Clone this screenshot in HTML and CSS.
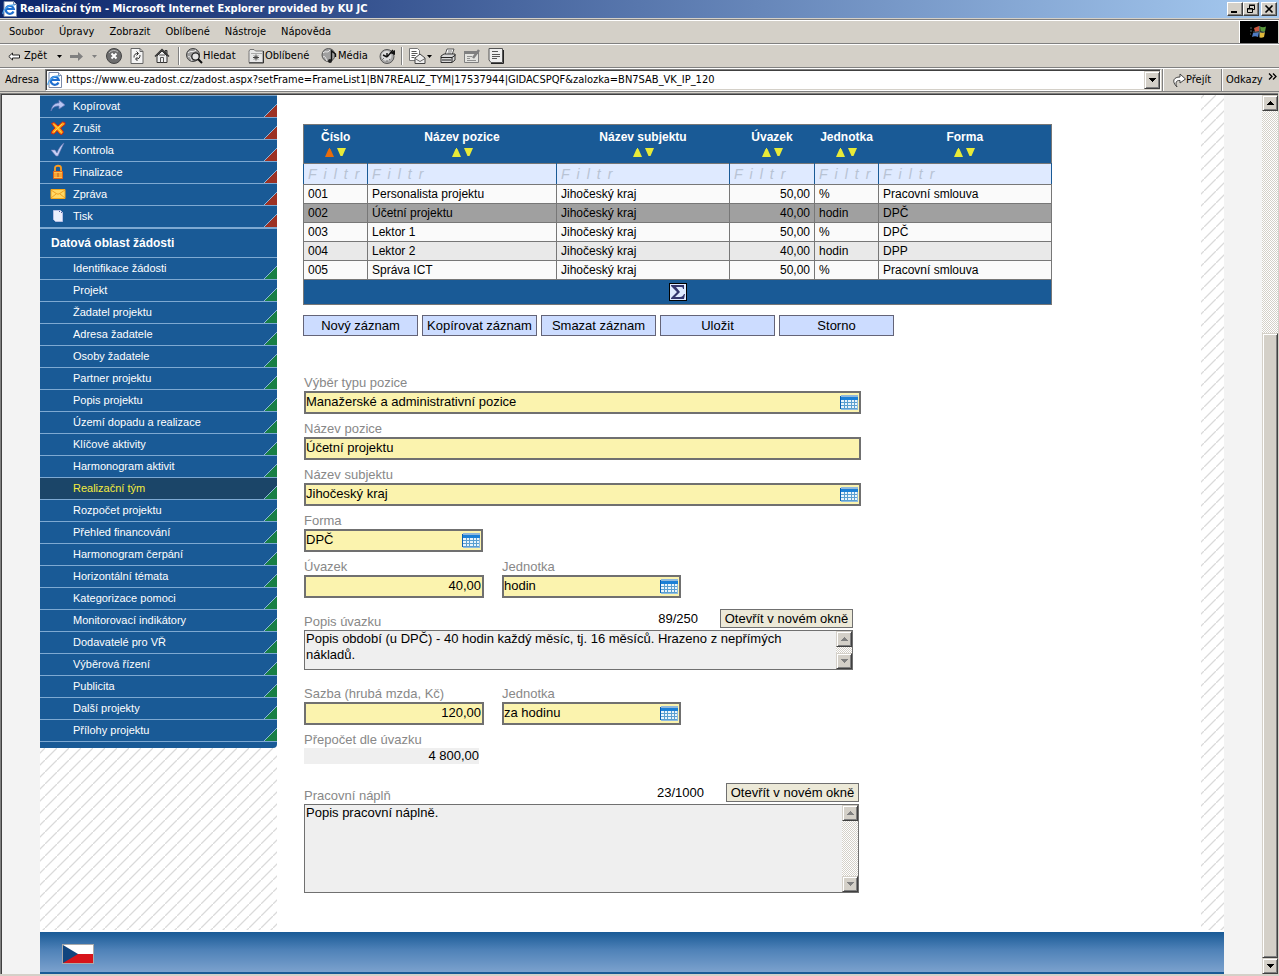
FILE: index.html
```html
<!DOCTYPE html>
<html lang="cs">
<head>
<meta charset="utf-8">
<title>Realizační tým</title>
<link rel="stylesheet" href="styles.css">
</head>
<body>
<svg class="defs" aria-hidden="true">
  <symbol id="ie" viewBox="0 0 16 16">
    <path d="M2 .5h9.500l3 3v12H2z" fill="#fff" stroke="#7b8aa8"/>
    <path d="M11.500.5v3h3" fill="#dfe6f2" stroke="#7b8aa8"/>
    <path d="M11.500 10.500A4 4 0 1 1 11.800 8H5" fill="none" stroke="#1f6fd0" stroke-width="2.200"/>
    <path d="M1 13C0 10 6 3 13 4" fill="none" stroke="#4aa3ee" stroke-width="1.200"/>
  </symbol>
  <symbol id="grid" viewBox="0 0 18 15">
    <path d="M0 1h1v13H0z" fill="#0a5fb4"/>
    <path d="M1 0h17v15H1z" fill="#e9f4fb"/>
    <path d="M1 0h17v2H1z" fill="#8fb8dc"/>
    <path d="M1 2h17v3H1z" fill="#1b80d6"/>
    <path d="M1 7.500h17M1 10.500h17M1 13.500h17M4.500 5v10M7.500 5v10M11.500 5v10M14.500 5v10" stroke="#5a9fd0" fill="none"/>
    <path d="M17.500 5v10M1 14.500h17" stroke="#8fbbe0" fill="none"/>
  </symbol>
  <symbol id="up" viewBox="0 0 9 9"><path d="M4 0h1v1H4zM3.500 1h2L9 9H0z" fill="currentColor"/></symbol>
  <symbol id="down" viewBox="0 0 9 9"><path d="M0 0h9L5.500 8h-2z" fill="currentColor"/></symbol>
  <symbol id="tri-up" viewBox="0 0 7 4" shape-rendering="crispEdges"><path d="M3 0h1v1h1v1h1v1h1v1H0V3h1V2h1V1h1z" fill="currentColor"/></symbol>
  <symbol id="tri-down" viewBox="0 0 7 4" shape-rendering="crispEdges"><path d="M0 0h7v1H6v1H5v1H4v1H3V3H2V2H1V1H0z" fill="currentColor"/></symbol>
</svg>

<header class="titlebar">
  <svg class="i16"><use href="#ie"/></svg>
  <h1 class="title">Realizační tým - Microsoft Internet Explorer provided by KU JC</h1>
  <div class="winbtns">
    <button class="winbtn" aria-label="Minimalizovat"><svg width="12" height="10"><path d="M2 7h6v2H2z"/></svg></button>
    <button class="winbtn" aria-label="Obnovit"><svg width="12" height="10" fill="none" stroke="#000"><path d="M4.500 4V1.500h5v4H8M4 1h6M2.500 4.500h5v4h-5zM2 5h6"/></svg></button>
    <button class="winbtn winbtn-close" aria-label="Zavřít"><svg width="12" height="10" fill="none" stroke="#000" stroke-width="1.600"><path d="M2.500 1.500l7 7M9.500 1.500l-7 7"/></svg></button>
  </div>
</header>

<nav class="menubar">
  <button class="menu">Soubor</button><button class="menu">Úpravy</button><button class="menu">Zobrazit</button><button class="menu">Oblíbené</button><button class="menu">Nástroje</button><button class="menu">Nápověda</button>
  <span class="throbber"><svg width="18" height="16" viewBox="0 0 18 16"><path d="M4 4l5-2 1 5-5 1z" fill="#c9573f"/><path d="M10 2.500c2 1 4 1 6 0l-1 5c-2 1-3 0-4.500-.5z" fill="#5a9a3c"/><path d="M3 9l6-1-1 5c-2-1-4-1-6 0z" fill="#4e7cc4"/><path d="M10 8c2 1 3 1 5 0l-1 5c-2 1-4 1-5 0z" fill="#e0b93c"/><path d="M0 4h2M0 7h2M0 10h1M9.500 2v11M3 8h12" stroke="#566"/></svg></span>
</nav>

<div class="toolbar">
  <button class="tool tool-back"><svg width="12" height="9" fill="#fff" stroke="#222"><path d="M.8 4.500L4.500 1v2h7v3h-7v2z"/></svg>Zpět<svg class="caret" width="5" height="3"><path d="M0 0h5L2.500 3z"/></svg></button>
  <button class="tool tool-fwd" aria-label="Vpřed"><svg width="13" height="9" fill="#808080"><path d="M0 3h8V0l5 4.500L8 9V6H0z"/></svg><svg class="caret" width="5" height="3" fill="#808080"><path d="M0 0h5L2.500 3z"/></svg></button>
  <button class="tool tool-icon" aria-label="Zastavit"><svg width="16" height="16"><circle cx="8" cy="8" r="7.500" fill="#6d6d6d" stroke="#444"/><path d="M3 5a6 6 0 0 1 9-1" stroke="#b9b9b9" fill="none"/><path d="M5.500 5.500l5 5M10.500 5.500l-5 5" stroke="#fff" stroke-width="2"/></svg></button>
  <button class="tool tool-icon" aria-label="Aktualizovat"><svg width="14" height="16" fill="none"><path d="M1 .5h9l3 3v12H1z" fill="#f4f4f4" stroke="#666"/><path d="M10 .5v3h3" stroke="#666"/><path d="M4 9.500c0-3 1-4 4-4M6.500 3.500l2 2-2 2M10 7c0 3-1 4-4 4M7.500 9l-2 2 2 2" stroke="#333"/></svg></button>
  <button class="tool tool-icon" aria-label="Domů"><svg width="16" height="16" fill="none" stroke="#333"><path d="M11 2.500h2V6h-2z" fill="#888"/><path d="M3 8v6.500h10V8L8 3z" fill="#eee"/><path d="M1 8.500l7-7 7 7" stroke-width="1.500"/><path d="M6.500 14.500V9.500h3v5M5 7h6" stroke="#555"/></svg></button>
  <span class="sep"></span>
  <button class="tool tool-search"><svg width="17" height="16" fill="none"><circle cx="7" cy="7" r="6.500" fill="#999" stroke="#444"/><path d="M2 5c3-3 5 0 8-3M2 9c2-2 3 2 4 4" stroke="#eee"/><circle cx="9.500" cy="8.500" r="3.700" fill="#e4e4e4" stroke="#222" stroke-width="1.300"/><path d="M12 11l4 4" stroke="#111" stroke-width="2"/></svg>Hledat</button>
  <button class="tool tool-fav"><svg width="16" height="16" fill="none"><path d="M1 4.500V3l1-1.500h4L7.500 3H15v11.500H1z" fill="#e8e8e8" stroke="#777"/><path d="M15.500 3v12H1" stroke="#333"/><path d="M3 5.500h11" stroke="#aaa"/><path d="M8 6.500v6M5 9.500h6M6 7.500l4 4M10 7.500l-4 4" stroke="#444"/></svg>Oblíbené</button>
  <button class="tool tool-media"><svg width="17" height="16" fill="none"><circle cx="7.500" cy="7" r="6.500" fill="#a0a0a0" stroke="#555"/><path d="M2 5c3-3 4 1 7-3M2 9c2-2 3 2 4 4" stroke="#f0f0f0"/><path d="M10.500 13V3l4 3v3" stroke="#111" stroke-width="1.400"/><circle cx="9" cy="13" r="2" fill="#222"/></svg>Média</button>
  <button class="tool tool-icon tool-history" aria-label="Historie"><svg width="17" height="16" fill="none"><circle cx="8" cy="8.500" r="7" fill="#aaa" stroke="#555"/><circle cx="7.500" cy="8" r="5" fill="#ddd"/><path d="M8 9l6-7M8 9L4 7M8 9V5" stroke="#111" stroke-width="1.400"/><path d="M11 5l5-3v5z" fill="#111"/><path d="M3 12l2-2M11 12l-1-1M8 14v-2" stroke="#777"/></svg></button>
  <span class="sep"></span>
  <button class="tool tool-mail" aria-label="Pošta"><svg width="17" height="16" fill="none"><path d="M.5.5h8l2 2v10H.5z" fill="#fff" stroke="#777"/><path d="M2.500 3.500h5M2.500 5.500h6M2.500 7.500h4M2.500 9.500h3" stroke="#555"/><path d="M6 10l5-4 5 4v5.500H6z" fill="#eee" stroke="#444"/><path d="M6 10.500l5 3 5-3" stroke="#666"/></svg><svg class="caret" width="5" height="3"><path d="M0 0h5L2.500 3z"/></svg></button>
  <button class="tool tool-icon" aria-label="Tisk"><svg width="17" height="16" fill="none"><path d="M5 7l2-6h7l-2 6z" fill="#fff" stroke="#555"/><path d="M8 3h4M7.500 5h4" stroke="#777"/><path d="M1 8l3-2h11v6l-3 2.500H1z" fill="#d8d8d8" stroke="#333"/><path d="M1 9.500h11M12 14V9.500L15.500 7M2 12h9" stroke="#222"/></svg></button>
  <button class="tool tool-icon" aria-label="Upravit"><svg width="17" height="16" fill="none"><path d="M.5 3.500h14v11H.5z" fill="#e4e4e0" stroke="#808080"/><path d="M0 4.500h15" stroke="#808080" stroke-width="3"/><path d="M3 8.500h5M3 10.500h3M3 12.500h9" stroke="#909090"/><path d="M9 10l6-8" stroke="#808080" stroke-width="2.500"/></svg></button>
  <button class="tool tool-icon" aria-label="Diskuse"><svg width="17" height="16" fill="none"><path d="M1 .5h13.500v14H3L1 12z" fill="#eee" stroke="#555"/><path d="M4 3.500h6M4 6.500h8M4 8.500h8M4 10.500h5" stroke="#555"/><path d="M15.500 2v13.500H3" stroke="#222"/></svg></button>
</div>

<form class="addressbar">
  <label class="addr-label" for="addr">Adresa</label>
  <div class="addr-box">
    <svg class="i16"><use href="#ie"/></svg>
    <input class="addr-input" id="addr" type="text" value="https://www.eu-zadost.cz/zadost.aspx?setFrame=FrameList1|BN7REALIZ_TYM|17537944|GIDACSPQF&amp;zalozka=BN7SAB_VK_IP_120">
    <button type="button" class="raised addr-drop" aria-label="Rozbalit"><svg width="7" height="4"><use href="#tri-down"/></svg></button>
  </div>
  <button type="button" class="addr-go"><svg width="14" height="15"><path d="M5 14C-1 8 2 4 8 4V1l5.500 5L8 10V7.500C4 7 3 10 5 14z" fill="#fff" stroke="#444"/></svg>Přejít</button>
  <button type="button" class="addr-links">Odkazy<svg width="9" height="7" fill="none" stroke="#000" stroke-width="1.300"><path d="M1 .5l3 3-3 3M5 .5l3 3-3 3"/></svg></button>
</form>

<div class="viewport">
  <div class="canvas">
    <div class="columns">
      <aside class="sidebar">
        <nav class="nav">
          <a class="nav-item action" href="#"><svg class="nav-icon" viewBox="0 0 16 16"><path d="M1 13C2 7 5 5 9 5V2l6 5-6 4V8C5 8 3 9 1 13z" fill="#b9c6f2" stroke="#6476b8" stroke-width=".8"/></svg>Kopírovat</a>
          <a class="nav-item action" href="#"><svg class="nav-icon" viewBox="0 0 16 16"><path d="M1.500 3.500L4 2.500l4 3.500 4.500-4 2.500.5v2L10.500 8l3 4-1.500 2.500-2-.5-3-3.500L4 14l-2.500-.5L2 11l3-3z" fill="#ffa218" stroke="#d6260c"/><path d="M4 4.500l3.500 3.500 4 4.500M4 12l8-8" stroke="#ffd74a" fill="none"/></svg>Zrušit</a>
          <a class="nav-item action" href="#"><svg class="nav-icon" viewBox="0 0 16 16"><path d="M1 8h4l2 3c2-5 4-8 7-10-2 4-4 8-6 13H6z" fill="#c9d0f4" stroke="#6f7bb8" stroke-width=".6"/></svg>Kontrola</a>
          <a class="nav-item action" href="#"><svg class="nav-icon" viewBox="0 0 16 16"><path d="M5 7V4c0-3 6-3 6 0v3" fill="none" stroke="#ff9d1e" stroke-width="1.800"/><path d="M3.500 7.500h9v7h-9z" fill="#ffc14d" stroke="#e0661a"/><path d="M7.500 9h1v4h-1z" fill="#b0450e"/><path d="M4 10h3M4 12h3M9 10h3M9 12h3" stroke="#f08a1c"/></svg>Finalizace</a>
          <a class="nav-item action" href="#"><svg class="nav-icon" viewBox="0 0 16 16"><path d="M1 3.500h14v9H1z" fill="#ffd966" stroke="#f5a81c"/><path d="M1 4l6 4h2l6-4M1 12l5-4M15 12l-5-4" fill="none" stroke="#f0a020"/></svg>Zpráva</a>
          <a class="nav-item action" href="#"><svg class="nav-icon" viewBox="0 0 16 16"><path d="M3.500 2.500h7l2 2v9h-7l-2-2z" fill="#edf0fc" stroke="#b6c0e6"/><path d="M9 3.500h1M11 4.500h1" stroke="#5560a0"/></svg>Tisk</a>
          <h2 class="nav-head">Datová oblast žádosti</h2>
          <a class="nav-item" href="#">Identifikace žádosti</a>
          <a class="nav-item" href="#">Projekt</a>
          <a class="nav-item" href="#">Žadatel projektu</a>
          <a class="nav-item" href="#">Adresa žadatele</a>
          <a class="nav-item" href="#">Osoby žadatele</a>
          <a class="nav-item" href="#">Partner projektu</a>
          <a class="nav-item" href="#">Popis projektu</a>
          <a class="nav-item" href="#">Území dopadu a realizace</a>
          <a class="nav-item" href="#">Klíčové aktivity</a>
          <a class="nav-item" href="#">Harmonogram aktivit</a>
          <a class="nav-item current" href="#" aria-current="page">Realizační tým</a>
          <a class="nav-item" href="#">Rozpočet projektu</a>
          <a class="nav-item" href="#">Přehled financování</a>
          <a class="nav-item" href="#">Harmonogram čerpání</a>
          <a class="nav-item" href="#">Horizontální témata</a>
          <a class="nav-item" href="#">Kategorizace pomoci</a>
          <a class="nav-item" href="#">Monitorovací indikátory</a>
          <a class="nav-item" href="#">Dodavatelé pro VŘ</a>
          <a class="nav-item" href="#">Výběrová řízení</a>
          <a class="nav-item" href="#">Publicita</a>
          <a class="nav-item" href="#">Další projekty</a>
          <a class="nav-item" href="#">Přílohy projektu</a>
          <div class="nav-end"></div>
        </nav>
        <div class="stripes stripes-left"></div>
      </aside>

      <main class="main">
        <table class="grid">
          <colgroup><col class="c-num"><col class="c-pos"><col class="c-sub"><col class="c-load"><col class="c-unit"><col class="c-form"></colgroup>
          <thead>
            <tr class="heads">
              <th>Číslo<span class="sort"><button class="sorted" aria-label="Vzestupně"><svg><use href="#up"/></svg></button><button aria-label="Sestupně"><svg><use href="#down"/></svg></button></span></th>
              <th>Název pozice<span class="sort"><button aria-label="Vzestupně"><svg><use href="#up"/></svg></button><button aria-label="Sestupně"><svg><use href="#down"/></svg></button></span></th>
              <th>Název subjektu<span class="sort"><button aria-label="Vzestupně"><svg><use href="#up"/></svg></button><button aria-label="Sestupně"><svg><use href="#down"/></svg></button></span></th>
              <th>Úvazek<span class="sort"><button aria-label="Vzestupně"><svg><use href="#up"/></svg></button><button aria-label="Sestupně"><svg><use href="#down"/></svg></button></span></th>
              <th>Jednotka<span class="sort"><button aria-label="Vzestupně"><svg><use href="#up"/></svg></button><button aria-label="Sestupně"><svg><use href="#down"/></svg></button></span></th>
              <th>Forma<span class="sort"><button aria-label="Vzestupně"><svg><use href="#up"/></svg></button><button aria-label="Sestupně"><svg><use href="#down"/></svg></button></span></th>
            </tr>
            <tr class="filters">
              <td><input type="text" placeholder="Filtr" aria-label="Filtr: Číslo"></td>
              <td><input type="text" placeholder="Filtr" aria-label="Filtr: Název pozice"></td>
              <td><input type="text" placeholder="Filtr" aria-label="Filtr: Název subjektu"></td>
              <td><input type="text" placeholder="Filtr" aria-label="Filtr: Úvazek"></td>
              <td><input type="text" placeholder="Filtr" aria-label="Filtr: Jednotka"></td>
              <td><input type="text" placeholder="Filtr" aria-label="Filtr: Forma"></td>
            </tr>
          </thead>
          <tbody>
            <tr><td>001</td><td>Personalista projektu</td><td>Jihočeský kraj</td><td class="num">50,00</td><td>%</td><td>Pracovní smlouva</td></tr>
            <tr class="selected"><td>002</td><td>Účetní projektu</td><td>Jihočeský kraj</td><td class="num">40,00</td><td>hodin</td><td>DPČ</td></tr>
            <tr><td>003</td><td>Lektor 1</td><td>Jihočeský kraj</td><td class="num">50,00</td><td>%</td><td>DPČ</td></tr>
            <tr class="even"><td>004</td><td>Lektor 2</td><td>Jihočeský kraj</td><td class="num">40,00</td><td>hodin</td><td>DPP</td></tr>
            <tr><td>005</td><td>Správa ICT</td><td>Jihočeský kraj</td><td class="num">50,00</td><td>%</td><td>Pracovní smlouva</td></tr>
          </tbody>
          <tfoot>
            <tr><td colspan="6"><button class="sum" aria-label="Součet"><svg width="16" height="16"><path d="M1 1h13v4h-1c0-2-1-2-3-2H6l4 5-5 5h5c2 0 3-1 4-3h1l-1 5H1v-1l6-6-6-6z" fill="#33366e"/></svg></button></td></tr>
          </tfoot>
        </table>

        <div class="actions">
          <button class="action-btn">Nový záznam</button>
          <button class="action-btn">Kopírovat záznam</button>
          <button class="action-btn">Smazat záznam</button>
          <button class="action-btn">Uložit</button>
          <button class="action-btn">Storno</button>
        </div>

        <form class="form">
          <div class="field wide">
            <label for="typ">Výběr typu pozice</label>
            <div class="box"><input id="typ" type="text" value="Manažerské a administrativní pozice"><button type="button" class="pick" aria-label="Vybrat"><svg><use href="#grid"/></svg></button></div>
          </div>
          <div class="field wide">
            <label for="nazev">Název pozice</label>
            <div class="box"><input id="nazev" type="text" value="Účetní projektu"></div>
          </div>
          <div class="field wide">
            <label for="subjekt">Název subjektu</label>
            <div class="box"><input id="subjekt" type="text" value="Jihočeský kraj"><button type="button" class="pick" aria-label="Vybrat"><svg><use href="#grid"/></svg></button></div>
          </div>
          <div class="field list">
            <label for="forma">Forma</label>
            <div class="box"><input id="forma" type="text" value="DPČ"><button type="button" class="pick" aria-label="Vybrat"><svg><use href="#grid"/></svg></button></div>
          </div>
          <div class="row">
            <div class="field">
              <label for="uvazek">Úvazek</label>
              <div class="box"><input class="num" id="uvazek" type="text" value="40,00"></div>
            </div>
            <div class="field list">
              <label for="jednotka1">Jednotka</label>
              <div class="box"><input id="jednotka1" type="text" value="hodin"><button type="button" class="pick" aria-label="Vybrat"><svg><use href="#grid"/></svg></button></div>
            </div>
          </div>
          <div class="memo memo-short">
            <div class="memo-head"><label for="popis">Popis úvazku</label><span class="count">89/250</span><button type="button" class="open">Otevřít v novém okně</button></div>
            <div class="memo-box">
              <textarea id="popis">Popis období (u DPČ) - 40 hodin každý měsíc, tj. 16 měsíců. Hrazeno z nepřímých nákladů.</textarea>
              <div class="scroll disabled"><span class="raised scroll-btn"><svg width="7" height="4"><use href="#tri-up"/></svg></span><span class="scroll-track"></span><span class="raised scroll-btn"><svg width="7" height="4"><use href="#tri-down"/></svg></span></div>
            </div>
          </div>
          <div class="row">
            <div class="field">
              <label for="sazba">Sazba (hrubá mzda, Kč)</label>
              <div class="box"><input class="num" id="sazba" type="text" value="120,00"></div>
            </div>
            <div class="field list">
              <label for="jednotka2">Jednotka</label>
              <div class="box"><input id="jednotka2" type="text" value="za hodinu"><button type="button" class="pick" aria-label="Vybrat"><svg><use href="#grid"/></svg></button></div>
            </div>
          </div>
          <div class="field">
            <label for="prepocet">Přepočet dle úvazku</label>
            <input class="readonly num" id="prepocet" type="text" value="4 800,00" readonly>
          </div>
          <div class="memo memo-tall">
            <div class="memo-head"><label for="napln">Pracovní náplň</label><span class="count">23/1000</span><button type="button" class="open">Otevřít v novém okně</button></div>
            <div class="memo-box">
              <textarea id="napln">Popis pracovní náplně.</textarea>
              <div class="scroll disabled"><span class="raised scroll-btn"><svg width="7" height="4"><use href="#tri-up"/></svg></span><span class="scroll-track"></span><span class="raised scroll-btn"><svg width="7" height="4"><use href="#tri-down"/></svg></span></div>
            </div>
          </div>
        </form>
      </main>
      <div class="stripes stripes-right"></div>
    </div>
    <footer class="footer">
      <a href="#" aria-label="Čeština"><svg class="flag" width="32" height="20"><path d="M0 0h32v20H0z" fill="#aaa"/><path d="M1 1h30v9H1z" fill="#fff"/><path d="M1 10h30v9H1z" fill="#d7141a"/><path d="M1 1l15 9-15 9z" fill="#11457e"/></svg></a>
    </footer>
  </div>
  <div class="scroll page-scroll"><span class="raised scroll-btn"><svg width="7" height="4"><use href="#tri-up"/></svg></span><span class="scroll-track"></span><span class="raised scroll-thumb"></span><span class="raised scroll-btn"><svg width="7" height="4"><use href="#tri-down"/></svg></span></div>
</div>
</body>
</html>
```
FILE: styles.css
```css
* { box-sizing: border-box; }

body {
  margin: 0;
  min-height: 100vh;
  display: flex;
  flex-direction: column;
  background: #d4d0c8;
  color: #000;
  font: 11px/14px "DejaVu Sans Condensed", "Liberation Sans", sans-serif;
}

button, input, textarea {
  margin: 0;
  padding: 0;
  border: 0;
  border-radius: 0;
  outline: 0;
  background: none;
  color: inherit;
  font: inherit;
}

svg { display: block; flex: none; }
.defs { position: absolute; width: 0; height: 0; }
.i16 { width: 16px; height: 16px; }

.raised {
  display: flex;
  align-items: center;
  justify-content: center;
  background: #d4d0c8;
  border: 1px solid;
  border-color: #d4d0c8 #404040 #404040 #d4d0c8;
  box-shadow: inset 1px 1px #fff, inset -1px -1px #808080;
}

/* Window chrome */
.titlebar {
  display: flex;
  align-items: center;
  gap: 2px;
  height: 18px;
  padding: 0 2px;
  background: linear-gradient(90deg, #0a246a, #a6caf0);
}
.title { flex: 1; margin: 0; color: #fff; font-size: 11px; line-height: 18px; font-weight: bold; white-space: nowrap; }
.winbtns { display: flex; }
.winbtn {
  width: 16px;
  height: 14px;
  display: flex;
  align-items: center;
  justify-content: center;
  background: #d4d0c8;
  border: 1px solid;
  border-color: #fff #404040 #404040 #fff;
  box-shadow: inset -1px -1px #808080;
}
.winbtn-close { margin-left: 2px; }

.menubar, .toolbar, .addressbar {
  display: flex;
  align-items: center;
  border-top: 1px solid #fff;
  border-bottom: 1px solid #808080;
}
.menubar { height: 24px; margin-top: 2px; padding-left: 3px; box-shadow: 0 -1px #808080; }
.menu { padding: 0 6px; margin-right: 3px; line-height: 22px; }
.throbber {
  display: flex;
  align-items: center;
  justify-content: center;
  align-self: stretch;
  width: 39px;
  margin-left: auto;
  margin-right: 1px;
  background: #000;
  border-left: 1px solid #fff;
}

.toolbar { height: 24px; padding-left: 8px; }
.tool { display: flex; align-items: center; height: 22px; white-space: nowrap; }
.tool-back { width: 62px; gap: 4px; }
.tool-back .caret { margin-left: 6px; }
.tool-fwd { width: 36px; gap: 9px; }
.tool-icon { width: 24px; }
.tool-search { width: 62px; }
.tool-fav { width: 73px; gap: 1px; }
.tool-media { width: 58px; }
.tool-history { width: 22px; }
.tool-mail { width: 31px; gap: 1px; }
.sep { width: 2px; height: 18px; margin: 0 6px 0 0; border-left: 1px solid #808080; border-right: 1px solid #fff; }

.addressbar { height: 24px; padding-left: 5px; }
.addr-label { width: 40px; }
.addr-box {
  flex: 1;
  display: flex;
  align-items: center;
  height: 22px;
  padding-left: 1px;
  background: #fff;
  border: 1px solid;
  border-color: #808080 #fff #fff #808080;
  box-shadow: inset 1px 1px #404040, inset -1px -1px #d4d0c8;
}
.addr-input { flex: 1; min-width: 0; padding-left: 3px; }
.addr-drop { width: 16px; height: 18px; }
.addr-go, .addr-links {
  display: flex;
  align-items: center;
  height: 22px;
  border-left: 1px solid #808080;
  box-shadow: inset 1px 0 #fff;
  margin-left: 1px;
}
.addr-go { width: 58px; padding-left: 9px; gap: 0; }
.addr-links { width: 58px; padding-left: 4px; gap: 5px; }
.addr-links svg { margin-bottom: 7px; }

/* Page frame */
.viewport {
  flex: 1;
  display: flex;
  margin: 1px 1px 2px 0;
  border-left: 1px solid #808080;
  border-top: 1px solid #808080;
  box-shadow: inset 1px 1px #404040;
  padding: 1px 0 0 1px;
}
.canvas {
  flex: 1;
  display: flex;
  flex-direction: column;
  padding: 0 38px;
  background: #f3f3f3;
  font-family: "Liberation Sans", Arial, sans-serif;
}
.columns { flex: 1; display: flex; background: #fff; padding-bottom: 2px; }

.scroll { display: flex; flex-direction: column; width: 16px; flex: none; }
.scroll-btn { height: 16px; flex: none; }
.scroll-track { flex: 1; background: repeating-conic-gradient(#d4d0c8 0 25%, #fff 0 50%) 0 0 / 2px 2px; }
.scroll.disabled { color: #808080; }
.page-scroll .scroll-track { flex: 222; }
.page-scroll .scroll-thumb { flex: 624; }

/* Sidebar */
.sidebar { width: 237px; flex: none; display: flex; flex-direction: column; }
.nav { background: #195a96; color: #fff; border-bottom-right-radius: 4px; }
.nav-item {
  display: flex;
  align-items: center;
  height: 22px;
  padding: 0 0 1px 33px;
  border-top: 1px solid #7ea9d2;
  background: linear-gradient(135deg, transparent 47%, #8fb6da 47%, #8fb6da 53%, #187f45 53%) 100% 100% / 13px 13px no-repeat;
  color: #fff;
  text-decoration: none;
}
.nav-item.action {
  padding-left: 10px;
  gap: 7px;
  background-image: linear-gradient(135deg, transparent 47%, #8fb6da 47%, #8fb6da 53%, #9c3224 53%);
}
.nav-icon { width: 16px; height: 16px; }
.nav-item.current { background-color: #1b4568; color: #f5ec3c; }
.nav-head {
  margin: 0;
  padding-left: 11px;
  border-top: 2px solid #7ea9d2;
  font-size: 12px;
  line-height: 28px;
}
.nav-end { height: 7px; border-top: 1px solid #7ea9d2; }

.stripes { background-image: linear-gradient(135deg, transparent 45%, #dadada 47%, #dadada 53%, transparent 55%); background-size: 12px 12px; }
.stripes-left { flex: 1; background-position: 5px 0; }
.stripes-right { width: 23px; background-position: 3px 0; }

/* Content */
.main { flex: 1; padding: 29px 0 30px 26px; }

.grid {
  width: 749px;
  table-layout: fixed;
  border-collapse: collapse;
  font-size: 12px;
  line-height: 14px;
}
.c-num, .c-unit { width: 64px; }
.c-pos { width: 189px; }
.c-sub, .c-form { width: 173px; }
.c-load { width: 85px; }
.grid td { height: 19px; padding: 0 4px; border: 1px solid #777; background: #fafafa; }
.grid .even td { background: #e9e9e9; }
.grid .selected td { background: #a0a0a0; }
.grid td.num { text-align: right; }
.grid th { height: 39px; padding: 0 0 1px; background: #195a96; color: #fff; font-weight: bold; }
.grid .heads { border: 1px solid #777; }
.sort { display: flex; justify-content: center; gap: 3px; margin-top: 4px; }
.sort button { color: #e8ea38; }
.sort .sorted { color: #e86c0a; }
.sort svg { width: 9px; height: 9px; }
.grid .filters td { height: 21px; background: #dfeaff; border-left-color: #195a96; border-right-color: #195a96; }
.filters input { display: block; width: 100%; font-style: italic; font-size: 14px; letter-spacing: 7px; }
.filters input::placeholder { color: #b8c3d4; opacity: 1; }
.grid tfoot td { height: 25px; background: #195a96; }
.sum { display: block; margin: 0 auto; border: 1px solid #000; background: #dfeaff; }

.actions { display: flex; gap: 4px; margin-top: 10px; font-size: 13px; }
.action-btn { width: 115px; height: 21px; border: 1px solid #646478; background: #ccdcff; white-space: nowrap; }

.form { padding: 32px 0 0 1px; font-size: 13px; line-height: 16px; }
.row { display: flex; gap: 18px; }
.field { width: 180px; }
.field.wide { width: 557px; }
.field.list { width: 179px; }
.field label, .memo-head label { color: #888; }
.field label { display: block; padding-top: 7px; white-space: nowrap; }
.box { display: flex; align-items: center; height: 23px; background: #fbf3ae; border: 2px solid #707070; padding-right: 1px; }
.box input { flex: 1; min-width: 0; padding-bottom: 2px; }
.num { text-align: right; }
.pick svg { width: 18px; height: 15px; }
.readonly { display: block; width: 175px; height: 16px; background: #efefef; }

.memo-head { display: flex; align-items: flex-end; }
.memo-head label { flex: 1; }
.memo-short { width: 549px; margin: 11px 0 9px; }
.memo-tall { width: 555px; margin-top: 19px; }
.count { margin: 0 22px 3px 0; }
.open { width: 133px; height: 19px; margin-bottom: 2px; border: 1px solid #707070; background: #ece9d8; white-space: nowrap; }
.memo-box { display: flex; background: #efefef; border: 1px solid #707070; }
.memo-box textarea { flex: 1; resize: none; overflow: hidden; padding: 0 8px 0 1px; }
.memo-short .memo-box { height: 40px; }
.memo-tall .memo-box { height: 89px; }

.footer {
  height: 42px;
  padding: 12px 22px 0;
  background: linear-gradient(#195a96, #4f82b8 45%, #7ba1cd);
  border-bottom: 2px solid #195a96;
}
.footer a { display: inline-block; }
```
